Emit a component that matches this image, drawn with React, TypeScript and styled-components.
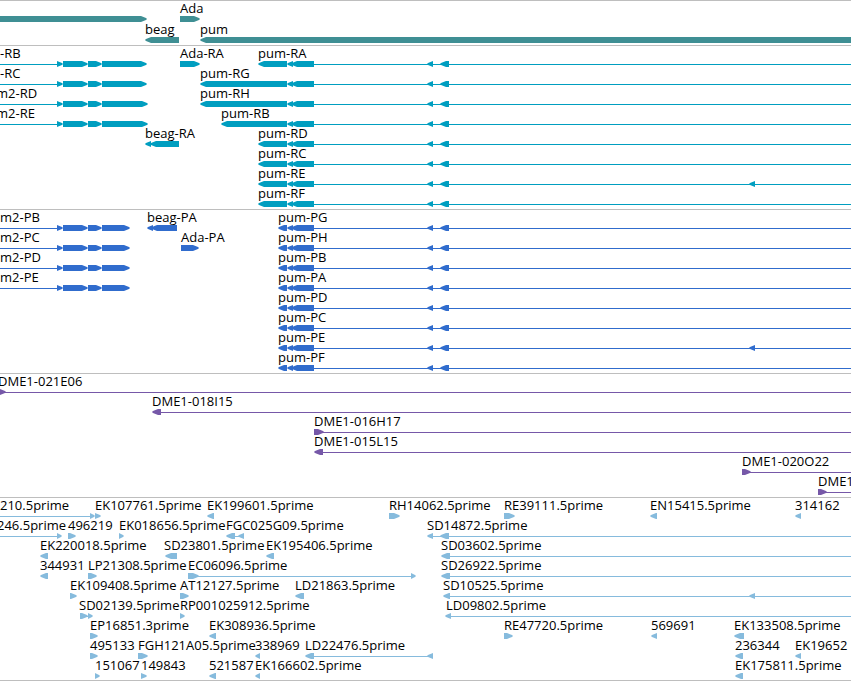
import React from "react";
import styled, { createGlobalStyle } from "styled-components";

const GlobalStyle = createGlobalStyle`
  body {
    margin: 0;
    background: #ffffff;
  }
`;

const Browser = styled.main`
  display: flex;
  flex-direction: column;
  width: 100%;
  overflow: hidden;
  border-bottom: 1px solid #bebebe;
  font-family: "Open Sans", "Noto Sans", sans-serif;
  font-size: 13px;
  line-height: 12px;
  color: #000000;
`;

const Track = styled.section<{ $color: string; $gap?: number; $end?: number }>`
  display: flex;
  flex-direction: column;
  gap: ${(p) => p.$gap ?? 0}px;
  padding: 1px 0 ${(p) => p.$end ?? 2}px;
  border-top: 1px solid #bebebe;
  color: ${(p) => p.$color};
`;

const Lane = styled.div`
  position: relative;
  display: flex;
  flex-direction: column;
  justify-content: flex-end;
  height: 20px;
`;

const Name = styled.span<{ $at: number }>`
  position: absolute;
  top: 0;
  left: ${(p) => p.$at}px;
  color: #000000;
  white-space: nowrap;
`;

const Glyphs = styled.svg`
  display: block;
  width: 100%;
  height: 6px;
  fill: currentColor;
`;

type Dir = "R" | "L";
type Arrow = [Dir, number, number];
type Line = [number, number | null];
type LaneData = { names: [number, string][]; arrows?: Arrow[]; lines?: Line[] };

function arrowPath([dir, a, b]: Arrow): string {
  const tip = Math.min(6, b - a);
  return dir === "R"
    ? `${a},0 ${b - tip},0 ${b - 1},2 ${b},3 ${b - 1},4 ${b - tip},6 ${a},6`
    : `${b},0 ${a + tip},0 ${a + 1},2 ${a},3 ${a + 1},4 ${a + tip},6 ${b},6`;
}

function LaneView({ names, arrows = [], lines = [] }: LaneData) {
  return (
    <Lane>
      <Glyphs aria-hidden="true">
        {lines.map(([from, to]) => (
          <rect key={from} x={from} y={3} height={1} width={to === null ? "100%" : to - from} />
        ))}
        {arrows.map((arrow) => (
          <polygon key={arrow[1]} points={arrowPath(arrow)} />
        ))}
      </Glyphs>
      {names.map(([at, text]) => (
        <Name key={text} $at={at}>
          {text}
        </Name>
      ))}
    </Lane>
  );
}

const leftGene = (end: number): Arrow[] => [
  ["R", 57, 63],
  ["R", 63, 88],
  ["R", 88, 102],
  ["R", 102, end],
];

const pumGene = (start: number): Arrow[] => [
  ["L", start, 287],
  ["L", 287, 293],
  ["L", 291, 314],
  ["L", 427, 433],
  ["L", 440, 449],
];

const intron: Line = [0, 57];
const pumLine: Line = [314, null];
const farExon: Arrow = ["L", 749, 755];

const genes: LaneData[] = [
  { names: [[180, "Ada"]], arrows: [["R", 0, 147], ["R", 180, 200]] },
  { names: [[145, "beag"], [200, "pum"]], arrows: [["L", 145, 179], ["L", 200, 8000]] },
];

const transcripts: LaneData[] = [
  {
    names: [[0, "-RB"], [180, "Ada-RA"], [258, "pum-RA"]],
    arrows: [...leftGene(147), ["R", 180, 200], ...pumGene(258)],
    lines: [intron, pumLine],
  },
  { names: [[0, "-RC"], [200, "pum-RG"]], arrows: [...leftGene(147), ...pumGene(200)], lines: [intron, pumLine] },
  { names: [[-4, "m2-RD"], [200, "pum-RH"]], arrows: [...leftGene(148), ...pumGene(200)], lines: [intron, pumLine] },
  { names: [[-4, "m2-RE"], [221, "pum-RB"]], arrows: [...leftGene(148), ...pumGene(221)], lines: [intron, pumLine] },
  {
    names: [[145, "beag-RA"], [258, "pum-RD"]],
    arrows: [["L", 145, 151], ["L", 150, 179], ...pumGene(258)],
    lines: [pumLine],
  },
  { names: [[258, "pum-RC"]], arrows: pumGene(258), lines: [pumLine] },
  { names: [[258, "pum-RE"]], arrows: [...pumGene(258), farExon], lines: [pumLine] },
  { names: [[258, "pum-RF"]], arrows: pumGene(258), lines: [pumLine] },
];

const proteins: LaneData[] = [
  {
    names: [[0, "m2-PB"], [147, "beag-PA"], [278, "pum-PG"]],
    arrows: [...leftGene(130), ["L", 147, 153], ["L", 151, 177], ...pumGene(278)],
    lines: [intron, pumLine],
  },
  {
    names: [[0, "m2-PC"], [181, "Ada-PA"], [278, "pum-PH"]],
    arrows: [...leftGene(130), ["R", 181, 199], ...pumGene(278)],
    lines: [intron, pumLine],
  },
  { names: [[0, "m2-PD"], [278, "pum-PB"]], arrows: [...leftGene(130), ...pumGene(278)], lines: [intron, pumLine] },
  { names: [[0, "m2-PE"], [278, "pum-PA"]], arrows: [...leftGene(130), ...pumGene(278)], lines: [intron, pumLine] },
  { names: [[278, "pum-PD"]], arrows: pumGene(278), lines: [pumLine] },
  { names: [[278, "pum-PC"]], arrows: pumGene(278), lines: [pumLine] },
  { names: [[278, "pum-PE"]], arrows: [...pumGene(278), farExon], lines: [pumLine] },
  { names: [[278, "pum-PF"]], arrows: pumGene(278), lines: [pumLine] },
];

const clones: LaneData[] = [
  { names: [[-2, "DME1-021E06"]], arrows: [["R", -3, 6]], lines: [[0, null]] },
  { names: [[152, "DME1-018I15"]], arrows: [["L", 152, 161]], lines: [[161, null]] },
  { names: [[314, "DME1-016H17"]], arrows: [["R", 314, 324]], lines: [[320, null]] },
  { names: [[314, "DME1-015L15"]], arrows: [["L", 314, 323]], lines: [[323, null]] },
  { names: [[742, "DME1-020O22"]], arrows: [["R", 742, 751]], lines: [[748, null]] },
  { names: [[818, "DME1"]], arrows: [["R", 818, 827]], lines: [[824, null]] },
];

const ests: LaneData[] = [
  {
    names: [
      [0, "210.5prime"],
      [95, "EK107761.5prime"],
      [207, "EK199601.5prime"],
      [389, "RH14062.5prime"],
      [504, "RE39111.5prime"],
      [650, "EN15415.5prime"],
      [795, "314162"],
    ],
    arrows: [["R", 90, 95], ["R", 95, 101], ["L", 207, 214], ["R", 389, 400], ["R", 504, 515], ["L", 650, 657], ["L", 795, 801]],
    lines: [[0, 90]],
  },
  {
    names: [
      [-3, "246.5prime"],
      [68, "496219"],
      [119, "EK018656.5prime"],
      [226, "FGC025G09.5prime"],
      [427, "SD14872.5prime"],
    ],
    arrows: [["R", 57, 62], ["R", 68, 76], ["R", 119, 124], ["L", 226, 235], ["L", 238, 244], ["L", 427, 433], ["L", 440, 449]],
    lines: [intron, [235, 239], [433, null]],
  },
  {
    names: [
      [40, "EK220018.5prime"],
      [164, "SD23801.5prime"],
      [266, "EK195406.5prime"],
      [441, "SD03602.5prime"],
    ],
    arrows: [["L", 40, 48], ["L", 165, 177], ["L", 266, 274], ["L", 441, 450]],
    lines: [[450, null]],
  },
  {
    names: [
      [40, "344931"],
      [88, "LP21308.5prime"],
      [188, "EC06096.5prime"],
      [441, "SD26922.5prime"],
    ],
    arrows: [["L", 40, 48], ["R", 88, 97], ["R", 188, 199], ["R", 411, 416], ["L", 441, 450]],
    lines: [[196, 411], [450, null]],
  },
  {
    names: [
      [70, "EK109408.5prime"],
      [180, "AT12127.5prime"],
      [295, "LD21863.5prime"],
      [443, "SD10525.5prime"],
    ],
    arrows: [["R", 70, 77], ["R", 180, 189], ["L", 295, 304], ["L", 443, 450], farExon],
    lines: [[450, null]],
  },
  {
    names: [
      [79, "SD02139.5prime"],
      [180, "RP001025912.5prime"],
      [446, "LD09802.5prime"],
    ],
    arrows: [["R", 80, 88], ["R", 88, 93], ["R", 180, 185], ["L", 445, 451]],
    lines: [[86, 89], [451, null]],
  },
  {
    names: [
      [90, "EP16851.3prime"],
      [209, "EK308936.5prime"],
      [504, "RE47720.5prime"],
      [651, "569691"],
      [734, "EK133508.5prime"],
    ],
    arrows: [["R", 90, 98], ["L", 209, 216], ["R", 504, 513], ["L", 651, 657], ["L", 734, 744]],
  },
  {
    names: [
      [90, "495133"],
      [138, "FGH121A05.5prime"],
      [255, "338969"],
      [305, "LD22476.5prime"],
      [735, "236344"],
      [795, "EK19652"],
    ],
    arrows: [["R", 90, 98], ["R", 138, 148], ["L", 255, 260], ["L", 305, 314], ["L", 427, 433], ["L", 735, 743], ["L", 795, 801]],
    lines: [[314, 428]],
  },
  {
    names: [
      [95, "151067"],
      [141, "149843"],
      [209, "521587"],
      [255, "EK166602.5prime"],
      [735, "EK175811.5prime"],
    ],
    arrows: [["R", 95, 100], ["R", 141, 147], ["L", 209, 216], ["L", 255, 260], ["L", 735, 743]],
  },
];

const tracks = [
  { title: "Genes", color: "#3f8f94", gap: 1, lanes: genes },
  { title: "Transcripts", color: "#009ec0", lanes: transcripts },
  { title: "Proteins", color: "#306ccd", lanes: proteins },
  { title: "Clones", color: "#7658a8", lanes: clones },
  { title: "ESTs", color: "#86bbdd", end: 1, lanes: ests },
];

export default function App() {
  return (
    <>
      <GlobalStyle />
      <Browser>
        {tracks.map((track) => (
          <Track key={track.title} aria-label={track.title} $color={track.color} $gap={track.gap} $end={track.end}>
            {track.lanes.map((lane, i) => (
              <LaneView key={i} {...lane} />
            ))}
          </Track>
        ))}
      </Browser>
    </>
  );
}
